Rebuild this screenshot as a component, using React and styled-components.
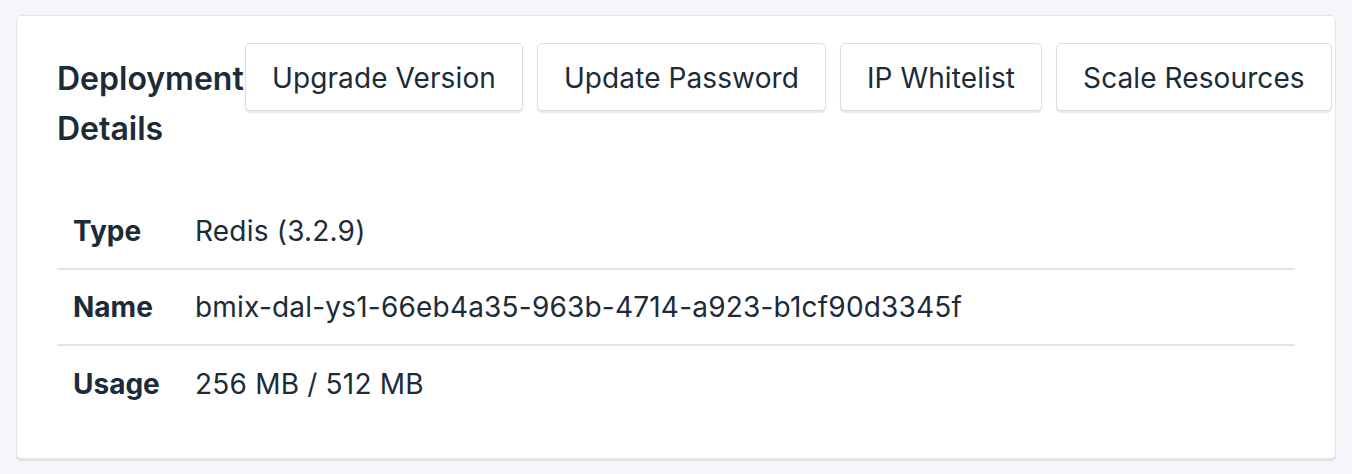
import React from "react";
import styled, { createGlobalStyle } from "styled-components";

const Global = createGlobalStyle`
  html, body { margin: 0; padding: 0; background: #f5f6fa; }
  body { font-family: Inter, "Noto Sans", sans-serif; color: #1c2b38; }
  * { box-sizing: border-box; }
`;

const Page = styled.div`
  padding: 15px 16px 16px 16px;
`;

const Card = styled.section`
  background: #fff;
  border: 1px solid #e3e6ea;
  border-radius: 5px;
  box-shadow: 0 2px 1px rgba(30, 40, 60, 0.10);
  padding: 27px 40px 36px 40px;
`;

const Header = styled.div`
  display: flex;
  align-items: flex-start;
`;

const Title = styled.h2`
  margin: 0;
  padding-top: 11px;
  flex: 0 0 188px;
  width: 188px;
  font-size: 32px;
  font-weight: 600;
  line-height: 50px;
  white-space: normal;
  overflow: visible;
`;

const Actions = styled.div`
  display: flex;
  gap: 14px;
  flex-shrink: 0;
`;

const Button = styled.button`
  font-family: inherit;
  font-size: 28px;
  font-weight: 400;
  letter-spacing: 0.1px;
  color: #1c2b38;
  background: #fff;
  border: 1px solid #dadde2;
  border-radius: 5px;
  box-shadow: 0 2px 1px rgba(30, 40, 60, 0.10);
  height: 68px;
  padding: 2px 26px 0 26px;
  white-space: nowrap;
  cursor: pointer;
`;

const Table = styled.div`
  margin-top: 40px;
  display: flex;
  flex-direction: column;
`;

const Row = styled.div`
  display: grid;
  grid-template-columns: 138px 1fr;
  align-items: center;
  height: 76px;
  border-bottom: ${(p) => (p.$last ? "none" : "2px solid #e1e5e9")};
`;

const Label = styled.div`
  padding-left: 16px;
  font-size: 28px;
  font-weight: 700;
`;

const Value = styled.div`
  font-size: 28px;
  font-weight: 400;
  letter-spacing: 0.2px;
`;

const rows = [
  ["Type", "Redis (3.2.9)"],
  ["Name", "bmix-dal-ys1-66eb4a35-963b-4714-a923-b1cf90d3345f"],
  ["Usage", "256 MB / 512 MB"],
];

export default function App() {
  return (
    <Page>
      <Global />
      <Card>
        <Header>
          <Title>Deployment Details</Title>
          <Actions>
            <Button>Upgrade Version</Button>
            <Button>Update Password</Button>
            <Button>IP Whitelist</Button>
            <Button>Scale Resources</Button>
          </Actions>
        </Header>
        <Table>
          {rows.map(([k, v], i) => (
            <Row key={k} $last={i === rows.length - 1}>
              <Label>{k}</Label>
              <Value>{v}</Value>
            </Row>
          ))}
        </Table>
      </Card>
    </Page>
  );
}
